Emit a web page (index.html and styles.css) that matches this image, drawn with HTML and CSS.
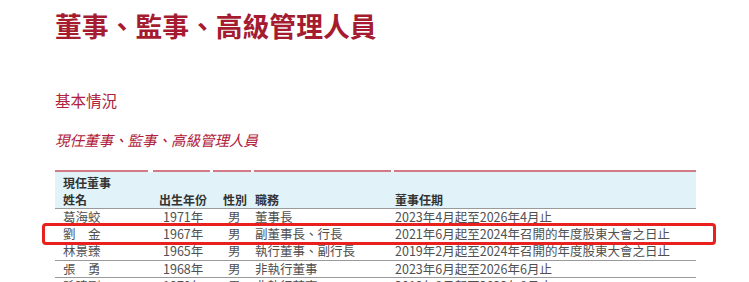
FILE: index.html
```html
<!DOCTYPE html>
<html lang="zh-Hant">
<head>
<meta charset="utf-8">
<link rel="stylesheet" href="styles.css">
</head>
<body>
<div class="page">
  <h1 class="title">董事、監事、高級管理人員</h1>
  <h2 class="section">基本情況</h2>
  <h3 class="subsection">現任董事、監事、高級管理人員</h3>
  <div class="table-wrap">
    <table class="grid">
      <colgroup>
        <col class="c-name"><col class="c-year"><col class="c-sex"><col class="c-pos"><col class="c-term">
      </colgroup>
      <thead>
        <tr class="rules">
          <th><span></span></th><th><span></span></th><th><span></span></th><th><span></span></th><th><span></span></th>
        </tr>
        <tr class="group"><th colspan="5">現任董事</th></tr>
        <tr class="heads">
          <th class="name">姓名</th><th class="year">出生年份</th><th class="sex">性別</th><th class="pos">職務</th><th class="term">董事任期</th>
        </tr>
      </thead>
      <tbody>
        <tr><td class="name">葛海蛟</td><td class="year">1971年</td><td class="sex">男</td><td class="pos">董事長</td><td class="term">2023年4月起至2026年4月止</td></tr>
        <tr><td class="name">劉　金</td><td class="year">1967年</td><td class="sex">男</td><td class="pos">副董事長、行長</td><td class="term">2021年6月起至2024年召開的年度股東大會之日止</td></tr>
        <tr><td class="name">林景臻</td><td class="year">1965年</td><td class="sex">男</td><td class="pos">執行董事、副行長</td><td class="term">2019年2月起至2024年召開的年度股東大會之日止</td></tr>
        <tr><td class="name">張　勇</td><td class="year">1968年</td><td class="sex">男</td><td class="pos">非執行董事</td><td class="term">2023年6月起至2026年6月止</td></tr>
        <tr><td class="name">孫曉剛</td><td class="year">1970年</td><td class="sex">男</td><td class="pos">非執行董事</td><td class="term">2019年8月起至2022年8月止</td></tr>
      </tbody>
    </table>
    <div class="highlight"></div>
  </div>
</div>
</body>
</html>
```
FILE: styles.css
```css
html, body {
  margin: 0;
  padding: 0;
  background: #ffffff;
  overflow: hidden;
}
body {
  font-family: "Noto Sans CJK TC", "Noto Sans", sans-serif;
}
.page {
  padding: 8px 0 0 55px;
  width: 641px;
}
.title {
  margin: 0;
  font-size: 26.8px;
  line-height: 36px;
  font-weight: 700;
  color: #a51c30;
}
.section {
  margin: 45px 0 0 0;
  font-size: 15.5px;
  line-height: 22px;
  font-weight: 400;
  color: #b0203a;
}
.subsection {
  margin: 19px 0 0 0;
  font-size: 14.5px;
  line-height: 20px;
  font-weight: 400;
  font-style: italic;
  color: #b0203a;
}
.table-wrap {
  position: relative;
  margin-top: 20px;
}
.grid {
  width: 641px;
  border-collapse: collapse;
  table-layout: fixed;
  font-size: 12.5px;
}
.c-name { width: 98px; }
.c-year { width: 60px; }
.c-sex { width: 41px; }
.c-pos { width: 140px; }
.c-term { width: 302px; }
.grid th, .grid td {
  padding: 0;
  text-align: left;
  white-space: nowrap;
  overflow: hidden;
}
.rules th {
  height: 2px;
  padding: 0 3px 0 0;
  background: #ffffff;
}
.rules th:first-child { padding-right: 5px; }
.rules th:last-child { padding-right: 0; }
.rules th span {
  display: block;
  height: 2px;
  background: #d27a85;
}
.group th, .heads th {
  background: #e2f2f9;
  font-weight: 700;
  font-size: 12px;
  color: #333333;
  line-height: 16px;
}
.group th {
  padding: 3px 0 0 8px;
}
.heads th {
  border-bottom: 1px solid #9a9a9a;
  padding-top: 1px;
}
.heads th.name { padding-left: 8px; }
.heads th.year { padding-left: 6px; }
.heads th.sex { padding-left: 10px; }
.heads th.pos { padding-left: 1px; }
.heads th.term { padding-left: 1px; }
.grid td {
  color: #505050;
  line-height: 16.2px;
  border-bottom: 1px solid #9a9a9a;
}
.grid td.name { padding-left: 8px; }
.grid td.year { padding-left: 10px; }
.grid td.sex { padding-left: 15px; }
.grid td.pos { padding-left: 1px; }
.grid td.term { padding-left: 1px; }
.highlight {
  position: absolute;
  left: -13px;
  top: 53px;
  width: 668px;
  height: 16px;
  border: 3px solid #e8201e;
  border-radius: 4px;
  pointer-events: none;
}
```
